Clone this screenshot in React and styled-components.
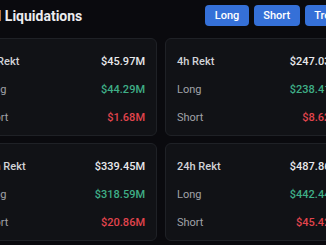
import React from "react";
import styled, { createGlobalStyle } from "styled-components";

const Global = createGlobalStyle`
  html, body {
    margin: 0;
    padding: 0;
    background: #0a0a0e;
    overflow: hidden;
  }
  body {
    font-family: Roboto, "Noto Sans", "Liberation Sans", sans-serif;
  }
`;

const Page = styled.div`
  width: 382px;
  margin-left: -30px;
  padding-top: 5px;
  display: flex;
  flex-direction: column;
  gap: 12px;
`;

const Header = styled.div`
  display: flex;
  align-items: center;
  justify-content: space-between;
  height: 21px;
`;

const Title = styled.h2`
  margin: 0;
  font-size: 14px;
  font-weight: 700;
  color: #ececef;
`;

const Tabs = styled.div`
  display: flex;
  gap: 5px;
`;

const Tab = styled.button`
  height: 21px;
  padding: 0 9.5px;
  border: none;
  border-radius: 4px;
  background: #3570d8;
  color: #ffffff;
  font-family: inherit;
  font-size: 11px;
  font-weight: 500;
`;

const Grid = styled.div`
  display: grid;
  grid-template-columns: 1fr 1fr;
  gap: 7px 8px;
`;

const Card = styled.div`
  background: #111216;
  border: 1px solid #1f2126;
  border-radius: 6px;
  padding: 12px 11px 8px 11px;
  display: flex;
  flex-direction: column;
  gap: 8px;
`;

const Row = styled.div`
  height: 20px;
  display: flex;
  align-items: center;
  justify-content: space-between;
  font-size: 11px;
`;

const Label = styled.span`
  color: ${(p) => (p.$head ? "#d2d3d7" : "#a0a2a8")};
  font-weight: ${(p) => (p.$head ? 500 : 400)};
`;

const Value = styled.span`
  font-weight: 500;
  color: ${(p) =>
    p.$tone === "up" ? "#3fae86" : p.$tone === "down" ? "#e2444d" : "#e8e8eb"};
`;

const data = [
  { label: "1h Rekt", total: "$45.97M", long: "$44.29M", short: "$1.68M" },
  { label: "4h Rekt", total: "$247.03M", long: "$238.41M", short: "$8.62M" },
  { label: "12h Rekt", total: "$339.45M", long: "$318.59M", short: "$20.86M" },
  { label: "24h Rekt", total: "$487.86M", long: "$442.44M", short: "$45.42M" },
];

export default function App() {
  return (
    <>
      <Global />
      <Page>
        <Header>
          <Title>Total Liquidations</Title>
          <Tabs>
            <Tab>Long</Tab>
            <Tab>Short</Tab>
            <Tab>Trend</Tab>
          </Tabs>
        </Header>
        <Grid>
          {data.map((d) => (
            <Card key={d.label}>
              <Row>
                <Label $head>{d.label}</Label>
                <Value>{d.total}</Value>
              </Row>
              <Row>
                <Label>Long</Label>
                <Value $tone="up">{d.long}</Value>
              </Row>
              <Row>
                <Label>Short</Label>
                <Value $tone="down">{d.short}</Value>
              </Row>
            </Card>
          ))}
        </Grid>
      </Page>
    </>
  );
}
